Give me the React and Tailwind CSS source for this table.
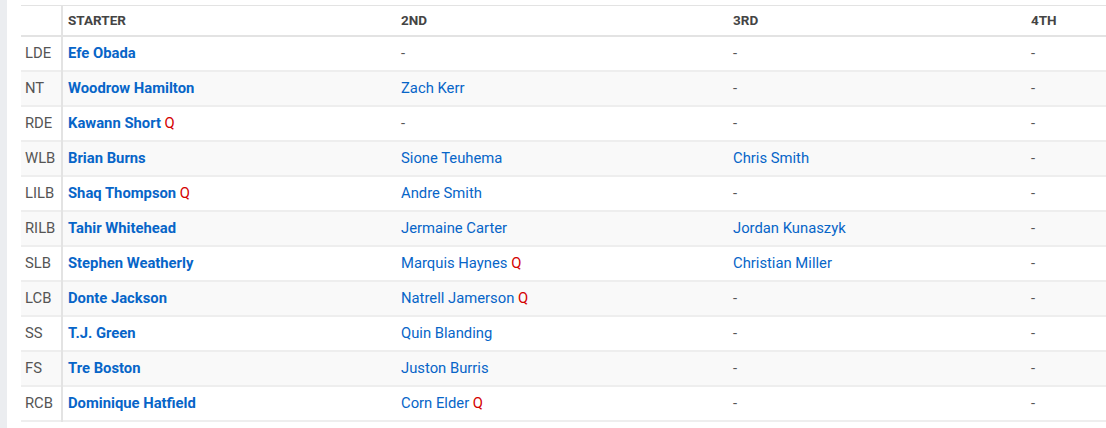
import React from "react";

const rows = [
  { pos: "LDE", starter: ["Efe Obada"], second: null, third: null },
  { pos: "NT", starter: ["Woodrow Hamilton"], second: ["Zach Kerr"], third: null },
  { pos: "RDE", starter: ["Kawann Short", true], second: null, third: null },
  { pos: "WLB", starter: ["Brian Burns"], second: ["Sione Teuhema"], third: ["Chris Smith"] },
  { pos: "LILB", starter: ["Shaq Thompson", true], second: ["Andre Smith"], third: null },
  { pos: "RILB", starter: ["Tahir Whitehead"], second: ["Jermaine Carter"], third: ["Jordan Kunaszyk"] },
  { pos: "SLB", starter: ["Stephen Weatherly"], second: ["Marquis Haynes", true], third: ["Christian Miller"] },
  { pos: "LCB", starter: ["Donte Jackson"], second: ["Natrell Jamerson", true], third: null },
  { pos: "SS", starter: ["T.J. Green"], second: ["Quin Blanding"], third: null },
  { pos: "FS", starter: ["Tre Boston"], second: ["Juston Burris"], third: null },
  { pos: "RCB", starter: ["Dominique Hatfield"], second: ["Corn Elder", true], third: null },
];

const Player = ({ p, bold }) => {
  if (!p) return <span className="text-[#555]">-</span>;
  return (
    <span>
      <a href="#" className={`text-[#0765c8] ${bold ? "font-bold" : ""}`}>
        {p[0]}
      </a>
      {p[1] && <span className="text-[#d40000]"> Q</span>}
    </span>
  );
};

export default function App() {
  return (
    <div className="flex bg-white h-[428px] overflow-hidden font-['Roboto',sans-serif] text-[14.8px]">
      <div className="w-[7px] bg-[#ebedf0] shrink-0" />
      <div className="pl-[14px] pt-[5px] flex-1">
        <table className="border-collapse w-[1086px] table-fixed">
          <colgroup>
            <col className="w-[41px]" />
            <col className="w-[334px]" />
            <col className="w-[332px]" />
            <col className="w-[298px]" />
            <col className="w-[81px]" />
          </colgroup>
          <thead>
            <tr className="h-[30px] border-t border-b-2 border-[#e3e3e3] text-[13.5px] font-bold text-[#444] text-left">
              <th className="border-r-2 border-[#e3e3e3]" />
              <th className="pl-[5px] font-bold">STARTER</th>
              <th className="pl-[5px] font-bold">2ND</th>
              <th className="pl-[5px] font-bold">3RD</th>
              <th className="pl-[5px] font-bold">4TH</th>
            </tr>
          </thead>
          <tbody>
            {rows.map((r, i) => (
              <tr
                key={r.pos}
                className={`h-[35px] border-b-2 border-[#eeeeee] ${i % 2 ? "bg-[#f9f9f9]" : "bg-white"}`}
              >
                <td className="pl-[4px] text-[#555] border-r-2 border-[#e3e3e3]">{r.pos}</td>
                <td className="pl-[5px]">
                  <Player p={r.starter} bold />
                </td>
                <td className="pl-[5px]">
                  <Player p={r.second} />
                </td>
                <td className="pl-[5px]">
                  <Player p={r.third} />
                </td>
                <td className="pl-[5px]">
                  <Player p={null} />
                </td>
              </tr>
            ))}
          </tbody>
        </table>
      </div>
    </div>
  );
}
